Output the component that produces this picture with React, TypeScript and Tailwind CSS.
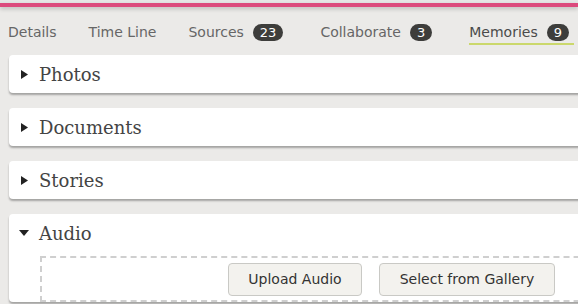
import React from "react";

const sans = { fontFamily: '"DejaVu Sans", Verdana, sans-serif' };
const serif = { fontFamily: '"DejaVu Serif", Georgia, serif' };

function Badge({ n }: { n: string }) {
  return (
    <span className="ml-[9px] inline-flex h-[17px] items-center rounded-full bg-[#3d3d3b] px-[7px] text-[13px] leading-none text-white">
      {n}
    </span>
  );
}

function Tab({ label, badge, active }: { label: string; badge?: string; active?: boolean }) {
  return (
    <div
      className={
        "flex items-center pb-[1px] border-b-2 " +
        (badge ? "pr-[5px] " : "") +
        (active ? "border-[#cbd86c] text-[#4a4a4a]" : "border-transparent text-[#666]")
      }
    >
      <span className="text-[14px] leading-[20px]">{label}</span>
      {badge && <Badge n={badge} />}
    </div>
  );
}

function Right() {
  return (
    <svg width="7" height="9" viewBox="0 0 7 9" className="shrink-0">
      <path d="M0 0 L7 4.5 L0 9 Z" fill="#222" />
    </svg>
  );
}

function Down() {
  return (
    <svg width="10" height="6" viewBox="0 0 10 6" className="shrink-0">
      <path d="M0 0 L10 0 L5 6 Z" fill="#222" />
    </svg>
  );
}

function Card({ title }: { title: string }) {
  return (
    <div className="flex h-[38px] items-center rounded-[4px] bg-white pl-[12px] shadow-[0_2px_2px_rgba(0,0,0,0.3)]">
      <Right />
      <span className="ml-[11px] text-[18px] text-[#444]" style={serif}>
        {title}
      </span>
    </div>
  );
}

export default function App() {
  return (
    <div className="h-[304px] w-[578px] overflow-hidden bg-[#ebeae8]" style={sans}>
      <div className="h-[3px] bg-[#e6e6e6]" />
      <div className="relative h-[4px] bg-[#dc4a7d] shadow-[0_2px_4px_rgba(0,0,0,0.2)]" />
      <nav className="flex h-[48px] items-start gap-8 pl-[8px] pt-[15px]">
        <Tab label="Details" />
        <Tab label="Time Line" />
        <Tab label="Sources" badge="23" />
        <Tab label="Collaborate" badge="3" />
        <Tab label="Memories" badge="9" active />
      </nav>
      <div className="flex w-[640px] flex-col gap-[15px] pl-[9px]">
        <Card title="Photos" />
        <Card title="Documents" />
        <Card title="Stories" />
        <div className="rounded-[4px] bg-white shadow-[0_2px_2px_rgba(0,0,0,0.3)]">
          <div className="flex h-[38px] items-center pl-[10px]">
            <Down />
            <span className="ml-[10px] text-[18px] text-[#444]" style={serif}>
              Audio
            </span>
          </div>
          <div className="ml-[31px] mt-[4px] flex gap-[17px] border-2 border-dashed border-[#cfcfcf] pb-[4px] pl-[186px] pt-[5px]">
            <button className="h-[33px] w-[134px] rounded-[4px] border border-[#c9c9c5] bg-[#f3f2ee] text-[14px] text-[#333]">
              Upload Audio
            </button>
            <button className="h-[33px] w-[176px] rounded-[4px] border border-[#c9c9c5] bg-[#f3f2ee] text-[14px] text-[#333]">
              Select from Gallery
            </button>
          </div>
        </div>
      </div>
    </div>
  );
}
